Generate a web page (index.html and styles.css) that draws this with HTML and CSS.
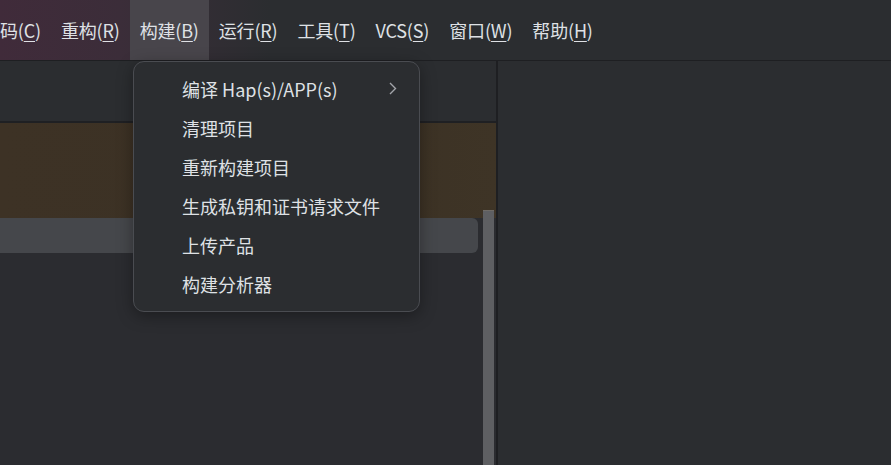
FILE: index.html
```html
<!DOCTYPE html>
<html lang="zh-CN">

<head>
    <meta charset="UTF-8">
    <meta name="viewport" content="width=device-width, initial-scale=1.0">
    <title>构建菜单</title>
    <link rel="stylesheet" href="styles.css">
</head>

<body>
    <div class="menubar">
        <span class="menu-item first">码(<u>C</u>)</span>
        <span class="menu-item">重构(<u>R</u>)</span>
        <span class="menu-item active">构建(<u>B</u>)</span>
        <span class="menu-item">运行(<u>R</u>)</span>
        <span class="menu-item">工具(<u>T</u>)</span>
        <span class="menu-item">VCS(<u>S</u>)</span>
        <span class="menu-item">窗口(<u>W</u>)</span>
        <span class="menu-item">帮助(<u>H</u>)</span>
    </div>

    <div class="workspace">
        <div class="left-panel">
            <div class="tabs"></div>
            <div class="highlight-block"></div>
            <div class="selected-row"></div>
            <div class="scrollbar"></div>
        </div>
        <div class="divider"></div>
        <div class="right-panel"></div>
    </div>

    <!-- dropdown for 构建(B) -->
    <div class="dropdown">
        <div class="dropdown-item">
            <span>编译 Hap(s)/APP(s)</span>
            <svg class="chevron" width="8" height="13" viewBox="0 0 8 13">
                <path d="M1 1 L6.5 6.5 L1 12" fill="none" stroke="#a3a5aa" stroke-width="1.4"/>
            </svg>
        </div>
        <div class="dropdown-item">清理项目</div>
        <div class="dropdown-item">重新构建项目</div>
        <div class="dropdown-item">生成私钥和证书请求文件</div>
        <div class="dropdown-item">上传产品</div>
        <div class="dropdown-item">构建分析器</div>
    </div>
</body>

</html>
```

FILE: styles.css
```css
body {
    margin: 0;
    width: 891px;
    height: 465px;
    overflow: hidden;
    position: relative;
    background-color: #2b2d30;
    font-family: "Noto Sans CJK SC", "Noto Sans", sans-serif;
    font-size: 18px;
    color: #dfe1e5;
}

u {
    text-decoration-thickness: 1px;
    text-underline-offset: 3px;
}

.menubar {
    display: flex;
    align-items: stretch;
    height: 60px;
    border-bottom: 1px solid #1e1f22;
    background: linear-gradient(90deg, #402b3a 0%, #3b2d39 120px, #2b2d30 270px);
}

.menu-item {
    display: flex;
    align-items: center;
    padding: 0 10px;
    letter-spacing: -0.18px;
    white-space: nowrap;
}

.menu-item.first {
    padding-left: 0;
}

.menu-item.active {
    background-color: #48454b;
}

.workspace {
    display: flex;
    height: 404px;
}

.left-panel {
    position: relative;
    width: 496px;
    background-color: #2b2c30;
}

.tabs {
    height: 60px;
    background-color: #2b2d30;
    border-bottom: 2px solid #1f2023;
}

.highlight-block {
    height: 95px;
    background: linear-gradient(90deg, #3d3225 0%, #3b3124 70%, #3e3426 100%);
}

.selected-row {
    height: 35px;
    width: 478px;
    background-color: #45474b;
    border-radius: 0 6px 6px 0;
}

.scrollbar {
    position: absolute;
    left: 483px;
    top: 149px;
    bottom: 0;
    width: 11px;
    background-color: #5e5f62;
    border-top: 1px solid #6f6b66;
}

.divider {
    width: 2px;
    background-color: #1e1f22;
}

.right-panel {
    flex: 1;
    background-color: #2b2d30;
}

.dropdown {
    position: absolute;
    left: 133px;
    top: 61px;
    width: 285px;
    padding: 7px 0 8px;
    background-color: #2b2d30;
    border: 1px solid #4a4c51;
    border-radius: 11px;
    box-shadow: 0 4px 16px rgba(0, 0, 0, 0.35);
}

.dropdown-item {
    display: flex;
    align-items: center;
    justify-content: space-between;
    height: 39px;
    padding: 0 22px 0 48px;
    white-space: nowrap;
}

.chevron {
    display: block;
}
```
